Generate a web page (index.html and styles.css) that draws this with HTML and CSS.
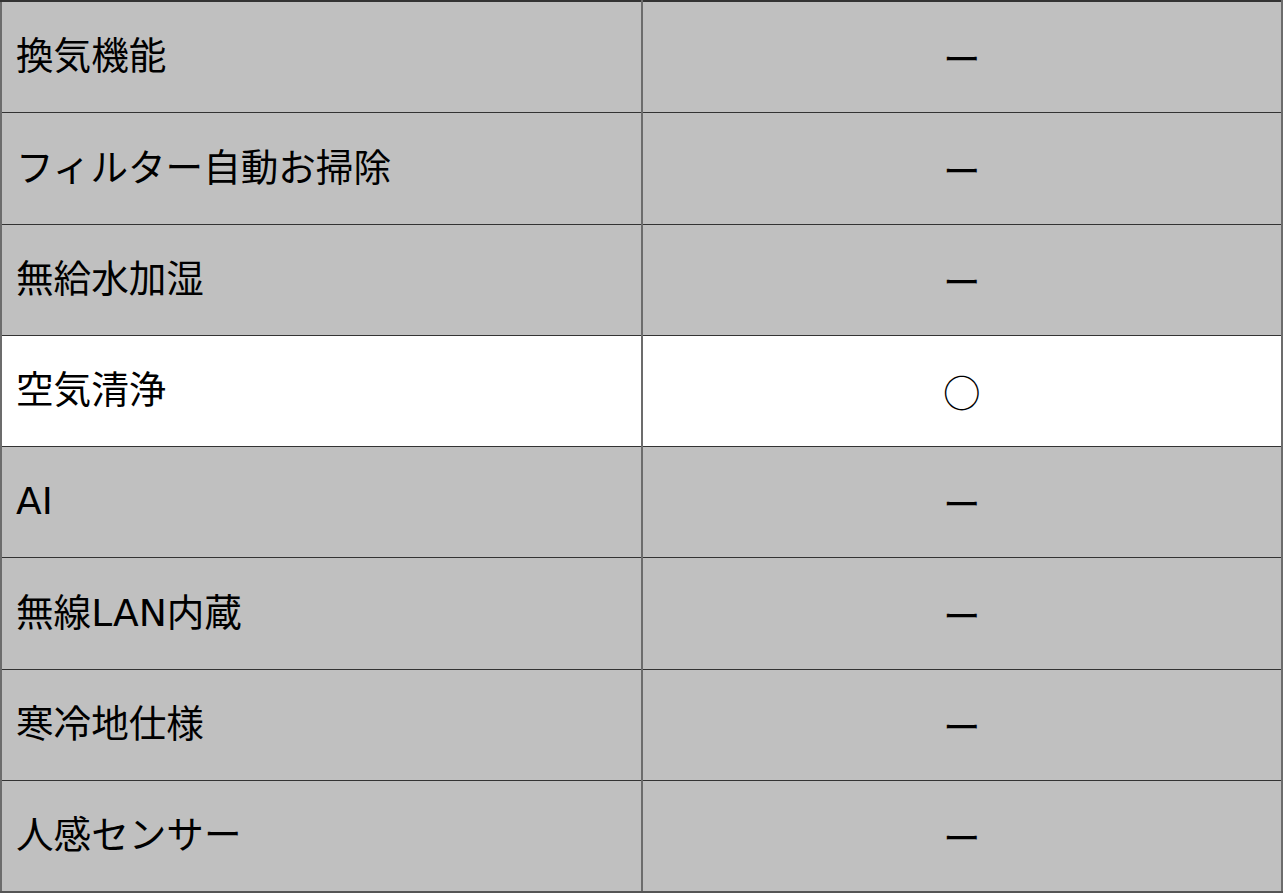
FILE: index.html
```html
<!DOCTYPE html>
<html lang="ja">
<head>
<meta charset="utf-8">
<link rel="stylesheet" href="styles.css">
</head>
<body>
<table class="spec">
  <tbody>
    <tr><td class="label">換気機能</td><td class="mark">ー</td></tr>
    <tr><td class="label">フィルター自動お掃除</td><td class="mark">ー</td></tr>
    <tr><td class="label">無給水加湿</td><td class="mark">ー</td></tr>
    <tr class="on"><td class="label">空気清浄</td><td class="mark">○</td></tr>
    <tr><td class="label">AI</td><td class="mark">ー</td></tr>
    <tr><td class="label">無線LAN内蔵</td><td class="mark">ー</td></tr>
    <tr><td class="label">寒冷地仕様</td><td class="mark">ー</td></tr>
    <tr><td class="label">人感センサー</td><td class="mark">ー</td></tr>
  </tbody>
</table>
</body>
</html>
```
FILE: styles.css
```css
html, body {
  margin: 0;
  padding: 0;
  background: #ffffff;
}
.spec {
  width: 1283px;
  border-collapse: collapse;
  table-layout: fixed;
  font-family: "DejaVu Sans", "Noto Sans CJK JP", sans-serif;
  font-size: 37.6px;
  color: #000;
}
.spec td {
  height: 110.25px;
  padding: 0 0 0 14px;
  background: #c0c0c0;
  border-top: 1px solid #333333;
  border-bottom: 1px solid #333333;
  border-left: 2px solid #6c6c6c;
  border-right: 2px solid #6c6c6c;
  vertical-align: middle;
  line-height: 1;
}
.spec tr:first-child td {
  border-top: 2px solid #333333;
}
.spec tr:last-child td {
  border-bottom: 2px solid #555555;
}
.spec tr.on td {
  background: #ffffff;
}
.spec td.mark {
  padding: 0;
  text-align: center;
  font-family: "Noto Sans CJK JP", sans-serif;
}
```
